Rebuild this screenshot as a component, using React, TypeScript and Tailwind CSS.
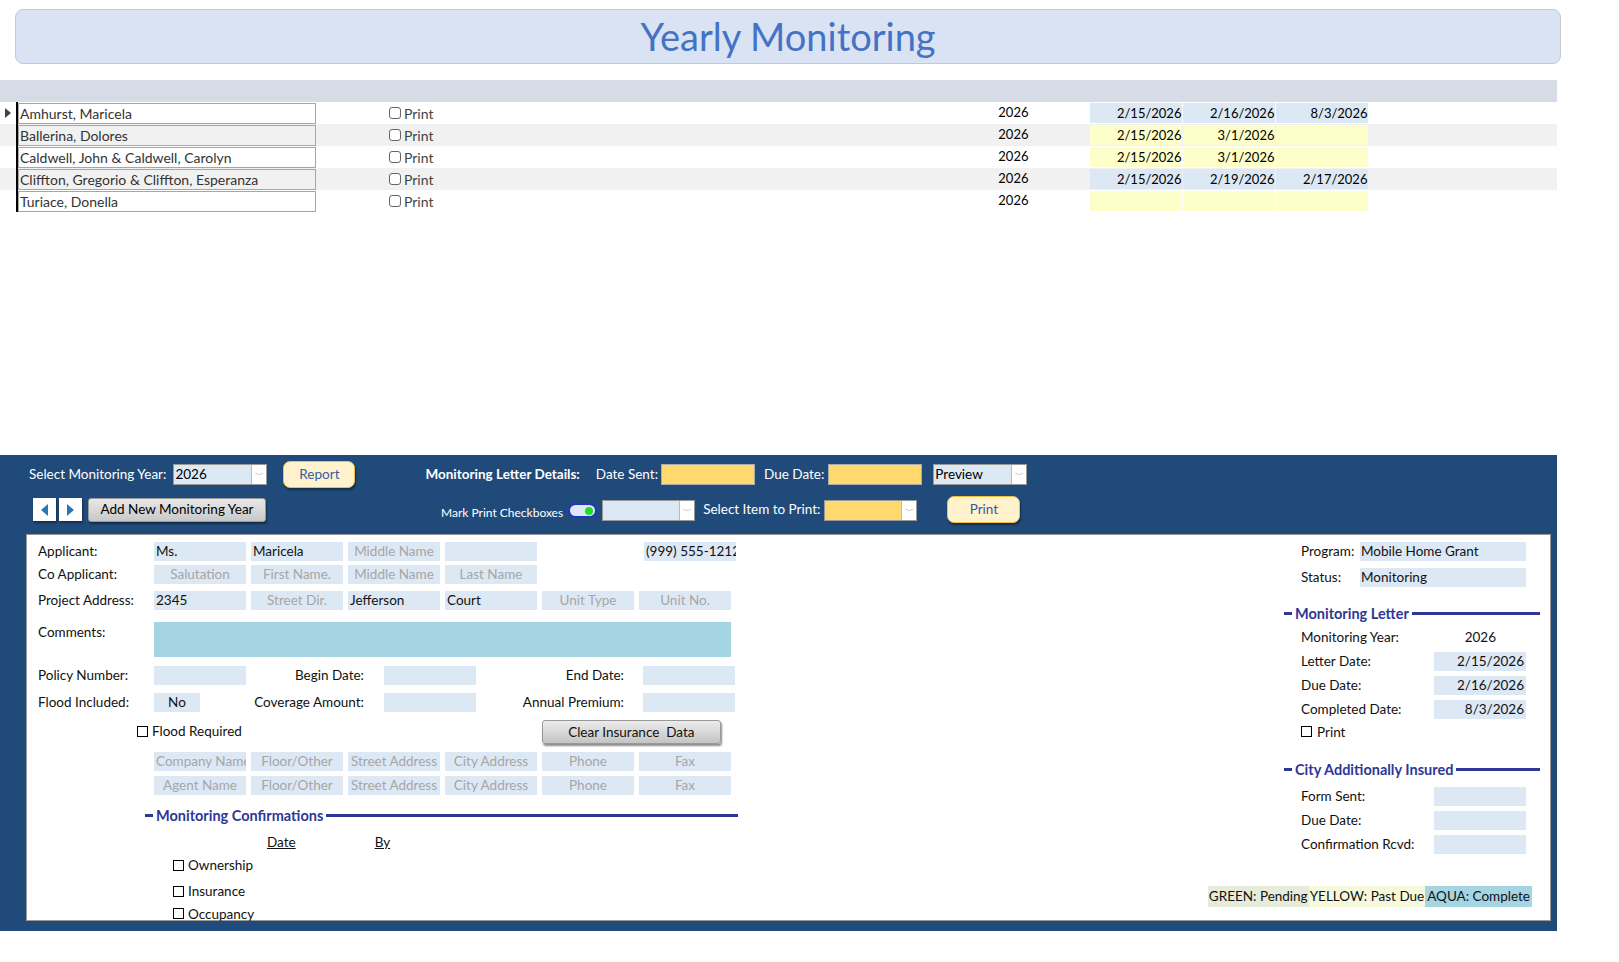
import React from "react";

const rows = [
  { name: "Amhurst, Maricela", d: ["2/15/2026", "2/16/2026", "8/3/2026"], c: "bg-[#dde8f5]" },
  { name: "Ballerina, Dolores", d: ["2/15/2026", "3/1/2026", ""], c: "bg-[#fefecb]" },
  { name: "Caldwell, John & Caldwell, Carolyn", d: ["2/15/2026", "3/1/2026", ""], c: "bg-[#fefecb]" },
  { name: "Cliffton, Gregorio & Cliffton, Esperanza", d: ["2/15/2026", "2/19/2026", "2/17/2026"], c: "bg-[#dde8f5]" },
  { name: "Turiace, Donella", d: ["", "", ""], c: "bg-[#fefecb]" },
];

function F({ v = "", ph = "", w = "w-[92px]", right = false, center = false }: { v?: string; ph?: string; w?: string; right?: boolean; center?: boolean }) {
  return (
    <div className={`${w} h-[19px] bg-[#dde8f5] px-[2px] leading-[19px] shrink-0 overflow-hidden whitespace-nowrap ${right ? "text-right" : ""} ${center || ph ? "text-center" : ""}`}>
      {v ? <span className="text-[#111]">{v}</span> : <span className="text-[#a6a6a6]">{ph}</span>}
    </div>
  );
}

function Box() {
  return <span className="inline-block w-[11px] h-[11px] border border-black bg-white shrink-0" />;
}

function Heading({ t, w }: { t: string; w: string }) {
  return (
    <div className={`flex items-center ${w} text-[#2e3796] font-bold text-[14.5px]`}>
      <span className="w-[8px] h-[3px] bg-[#2e3796] mr-[3px]" />
      <span>{t}</span>
      <span className="flex-1 h-[3px] bg-[#2e3796] ml-[3px]" />
    </div>
  );
}

export default function App() {
  return (
    <div className="w-[1619px] h-[962px] bg-white relative overflow-hidden text-[13.5px] text-[#222]" style={{ fontFamily: "Lato, 'Open Sans', sans-serif" }}>
      <div className="pt-[9px] pl-[15px] pr-[58px]">
        <div className="h-[55px] rounded-[8px] border border-[#c8c8c8] bg-[#dae3f3] flex items-center justify-center text-[38px] text-[#4472c4] leading-none pb-[2px]">
          Yearly Monitoring
        </div>
      </div>
      <div className="mt-[16px] w-[1557px] h-[22px] bg-[#d5dce5]" />
      <div className="w-[1557px]">
        {rows.map((r, i) => (
          <div key={i} className={`flex items-center h-[22px] ${i % 2 ? "bg-[#f1f1f1]" : "bg-white"}`}>
            <div className="w-[18px] h-[22px] border-r-2 border-black flex items-center justify-center">
              {i === 0 && <span className="w-0 h-0 border-y-[5px] border-y-transparent border-l-[6px] border-l-[#444]" />}
            </div>
            <div className="w-[298px] h-[21px] border border-[#a6a6a6] bg-transparent text-[#333] pl-[1px] leading-[19px] text-[14px]">{r.name}</div>
            <div className="ml-[73px] flex items-center gap-[3px] text-[#444] text-[14px]">
              <span className="w-[12px] h-[12px] rounded-[3px] border border-[#666] bg-white" />Print
            </div>
            <div className="ml-[555px] w-[40px] text-right text-black text-[13px]">2026</div>
            <div className="ml-[62px] flex gap-[1px]">
              {r.d.map((d, j) => (
                <div key={j} className={`w-[92px] h-[20px] ${r.c} text-right pr-[1px] leading-[20px] text-black text-[13px]`}>{d}</div>
              ))}
            </div>
          </div>
        ))}
      </div>

      <div className="absolute left-0 top-[455px] w-[1557px] h-[476px] bg-[#204a7a] text-white">
        <div className="flex items-center h-[37px] pt-[2px]">
          <span className="ml-[29px]">Select Monitoring Year:</span>
          <div className="ml-[7px] w-[94px] h-[21px] bg-[#dde8f5] border border-[#999] text-black flex items-center justify-between pl-[1px]">
            2026<span className="w-[15px] h-full bg-white border-l border-[#bbb] text-[#666] text-[9px] flex items-center justify-center">﹀</span>
          </div>
          <div className="ml-[16px] w-[72px] h-[27px] rounded-[7px] bg-[#fff2cc] border border-[#f0c040] text-[#2e5fa8] flex items-center justify-center shadow-[1px_2px_2px_rgba(0,0,0,0.4)]">Report</div>
          <span className="ml-[70px] font-bold">Monitoring Letter Details:</span>
          <span className="ml-[16px]">Date Sent:</span>
          <div className="ml-[3px] w-[94px] h-[21px] bg-[#ffd96e] border border-[#aaa]" />
          <span className="ml-[9px]">Due Date:</span>
          <div className="ml-[4px] w-[94px] h-[21px] bg-[#ffd96e] border border-[#aaa]" />
          <div className="ml-[11px] w-[94px] h-[21px] bg-[#dde8f5] border border-[#999] text-black flex items-center justify-between pl-[1px]">
            Preview<span className="w-[15px] h-full bg-white border-l border-[#bbb] text-[#666] text-[9px] flex items-center justify-center">﹀</span>
          </div>
        </div>
        <div className="flex items-center h-[35px]">
          <div className="ml-[33px] w-[23px] h-[23px] bg-white flex items-center justify-center shadow-[1px_2px_2px_rgba(0,0,0,0.4)]"><span className="w-0 h-0 border-y-[6px] border-y-transparent border-r-[7px] border-r-[#2e75b6]" /></div>
          <div className="ml-[3px] w-[23px] h-[23px] bg-white flex items-center justify-center shadow-[1px_2px_2px_rgba(0,0,0,0.4)]"><span className="w-0 h-0 border-y-[6px] border-y-transparent border-l-[7px] border-l-[#2e75b6]" /></div>
          <div className="ml-[6px] w-[178px] h-[24px] rounded-[3px] bg-gradient-to-b from-[#e8e8e8] to-[#c8c8c8] border border-[#999] text-black flex items-center justify-center shadow-[1px_2px_2px_rgba(0,0,0,0.4)]">Add New Monitoring Year</div>
          <span className="ml-[175px] text-[12px] mt-[6px]">Mark Print Checkboxes</span>
          <div className="ml-[5px] mt-[2px] w-[29px] h-[15px] rounded-full bg-[#dde8f5] border-2 border-[#2233cc] flex items-center justify-end pr-[2px]"><span className="w-[8px] h-[8px] rounded-full bg-[#22dd22]" /></div>
          <div className="ml-[5px] mt-[2px] w-[93px] h-[21px] bg-[#dde8f5] border border-[#999] flex justify-end"><span className="w-[15px] h-full bg-white border-l border-[#bbb] text-[#666] text-[9px] flex items-center justify-center">﹀</span></div>
          <span className="ml-[8px]">Select Item to Print:</span>
          <div className="ml-[4px] mt-[2px] w-[93px] h-[21px] bg-[#ffd96e] border border-[#999] flex justify-end"><span className="w-[15px] h-full bg-white border-l border-[#bbb] text-[#666] text-[9px] flex items-center justify-center">﹀</span></div>
          <div className="ml-[30px] w-[73px] h-[27px] rounded-[7px] bg-[#fff2cc] border border-[#f0c040] text-[#2e5fa8] flex items-center justify-center shadow-[1px_2px_2px_rgba(0,0,0,0.4)]">Print</div>
        </div>

        <div className="ml-[26px] mt-[7px] w-[1525px] h-[387px] bg-white border border-[#999] text-[#111] flex">
          <div className="w-[720px] pl-[11px] pt-[7px]">
            <div className="flex items-center gap-[5px] h-[19px]"><span className="w-[111px]">Applicant:</span><F v="Ms." /><F v="Maricela" /><F ph="Middle Name" /><F /><div className="w-[97px]" /><F v="(999) 555-1212" center /></div>
            <div className="flex items-center gap-[5px] h-[19px] mt-[4px]"><span className="w-[111px]">Co Applicant:</span><F ph="Salutation" /><F ph="First Name." /><F ph="Middle Name" /><F ph="Last Name" /></div>
            <div className="flex items-center gap-[5px] h-[19px] mt-[7px]"><span className="w-[111px]">Project Address:</span><F v="2345" /><F ph="Street Dir." /><F v="Jefferson" /><F v="Court" /><F ph="Unit Type" /><F ph="Unit No." /></div>
            <div className="flex gap-[5px] mt-[12px]"><span className="w-[111px]">Comments:</span><div className="w-[577px] h-[35px] bg-[#a5d4e2]" /></div>
            <div className="flex items-center h-[19px] mt-[9px]"><span className="w-[116px]">Policy Number:</span><F /><span className="w-[118px] text-right">Begin Date:</span><div className="w-[20px]" /><F /><span className="w-[148px] text-right">End Date:</span><div className="w-[19px]" /><F /></div>
            <div className="flex items-center h-[19px] mt-[8px]"><span className="w-[116px]">Flood Included:</span><div className="w-[46px] h-[19px] bg-[#dde8f5] text-center leading-[19px]">No</div><span className="w-[164px] text-right">Coverage Amount:</span><div className="w-[20px]" /><F /><span className="w-[148px] text-right">Annual Premium:</span><div className="w-[19px]" /><F /></div>
            <div className="flex items-start mt-[7px] h-[32px]">
              <div className="ml-[99px] flex items-center gap-[4px] mt-[2px]"><Box />Flood Required</div>
              <div className="ml-[300px] mt-[1px] w-[179px] h-[24px] rounded-[3px] bg-gradient-to-b from-[#ececec] to-[#c4c4c4] border border-[#999] flex items-center justify-center shadow-[1px_2px_2px_rgba(0,0,0,0.45)]">Clear Insurance&nbsp; Data</div>
            </div>
            <div className="flex items-center gap-[5px] h-[19px] mt-[1px]"><div className="w-[111px]" /><F ph="Company Name" /><F ph="Floor/Other" /><F ph="Street Address" /><F ph="City Address" /><F ph="Phone" /><F ph="Fax" /></div>
            <div className="flex items-center gap-[5px] h-[19px] mt-[5px]"><div className="w-[111px]" /><F ph="Agent Name" /><F ph="Floor/Other" /><F ph="Street Address" /><F ph="City Address" /><F ph="Phone" /><F ph="Fax" /></div>
            <div className="ml-[107px] mt-[10px]"><Heading t="Monitoring Confirmations" w="w-[593px]" /></div>
            <div className="flex mt-[5px] underline"><span className="ml-[229px]">Date</span><span className="ml-[79px]">By</span></div>
            <div className="ml-[135px] mt-[3px] flex flex-col gap-[4px]">
              <div className="flex items-center gap-[4px]"><Box />Ownership</div>
              <div className="flex items-center gap-[4px] mt-[2px]"><Box />Insurance</div>
              <div className="flex items-center gap-[4px] -mt-[2px]"><Box />Occupancy</div>
            </div>
          </div>
          <div className="flex-1" />
          <div className="w-[266px] pt-[7px] relative">
            <div className="flex items-center h-[19px] ml-[17px]"><span className="w-[59px]">Program:</span><div className="w-[166px] h-[19px] bg-[#dde8f5] pl-[1px] leading-[19px]">Mobile Home Grant</div></div>
            <div className="flex items-center h-[19px] ml-[17px] mt-[7px]"><span className="w-[59px]">Status:</span><div className="w-[166px] h-[19px] bg-[#dde8f5] pl-[1px] leading-[19px]">Monitoring</div></div>
            <div className="mt-[16px]"><Heading t="Monitoring Letter" w="w-[256px]" /></div>
            <div className="ml-[17px] flex items-center h-[19px] mt-[3px]"><span className="w-[133px]">Monitoring Year:</span><span className="w-[62px] text-right">2026</span></div>
            <div className="ml-[17px] flex items-center h-[19px] mt-[5px]"><span className="w-[133px]">Letter Date:</span><F v="2/15/2026" right /></div>
            <div className="ml-[17px] flex items-center h-[19px] mt-[5px]"><span className="w-[133px]">Due Date:</span><F v="2/16/2026" right /></div>
            <div className="ml-[17px] flex items-center h-[19px] mt-[5px]"><span className="w-[133px]">Completed Date:</span><F v="8/3/2026" right /></div>
            <div className="ml-[17px] flex items-center gap-[5px] mt-[3px]"><Box />Print</div>
            <div className="mt-[17px]"><Heading t="City Additionally Insured" w="w-[256px]" /></div>
            <div className="ml-[17px] flex items-center h-[19px] mt-[6px]"><span className="w-[133px]">Form Sent:</span><F /></div>
            <div className="ml-[17px] flex items-center h-[19px] mt-[5px]"><span className="w-[133px]">Due Date:</span><F /></div>
            <div className="ml-[17px] flex items-center h-[19px] mt-[5px]"><span className="w-[133px]">Confirmation Rcvd:</span><F /></div>
          </div>
        </div>
        <div className="absolute right-[25px] top-[431px] flex h-[21px] leading-[21px] text-[#111]">
          <span className="bg-[#e6ecd9] px-[1px]">GREEN: Pending</span>
          <span className="bg-[#f6f9dc] px-[1px]">YELLOW: Past Due</span>
          <span className="bg-[#a5d4e2] px-[2px]">AQUA: Complete</span>
        </div>
      </div>
    </div>
  );
}
